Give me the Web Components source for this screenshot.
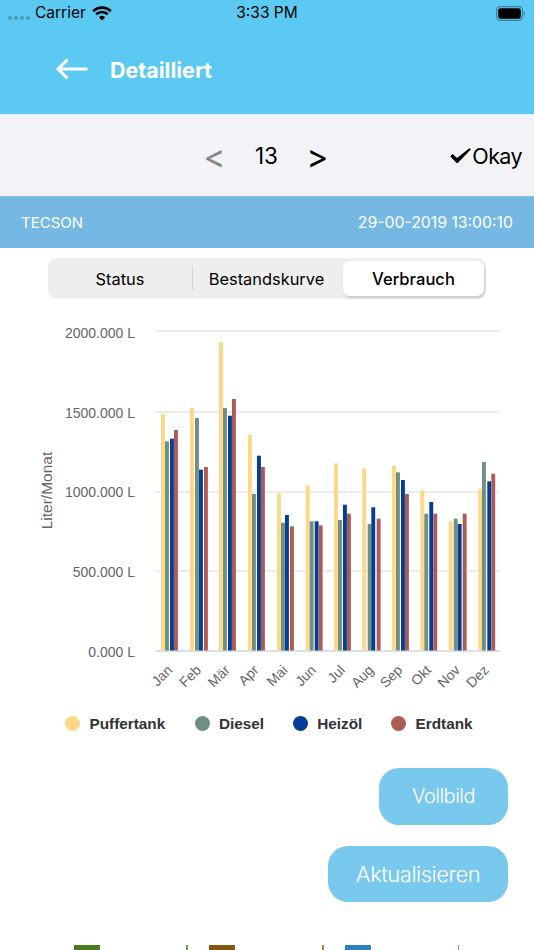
<!DOCTYPE html>
<html lang="de"><head><meta charset="utf-8"><title>Detailliert</title>
<style>
html,body{margin:0;padding:0;width:534px;height:950px;overflow:hidden;background:#fff;font-family:Inter,"Liberation Sans",sans-serif}
</style></head><body>
<detail-screen>
  <ios-status-bar carrier="Carrier" time="3:33 PM"></ios-status-bar>
  <nav-header>Detailliert</nav-header>
  <pager-row value="13" action="Okay"></pager-row>
  <info-band name="TECSON" stamp="29-00-2019 13:00:10"></info-band>
  <segment-control>
    <seg-item>Status</seg-item>
    <seg-item>Bestandskurve</seg-item>
    <seg-item selected>Verbrauch</seg-item>
  </segment-control>
  <usage-chart></usage-chart>
  <chart-legend>
    <legend-item color="#fed886" style="--w:129.5px">Puffertank</legend-item>
    <legend-item color="#6f9080" style="--w:98.3px">Diesel</legend-item>
    <legend-item color="#033e96" style="--w:98.3px">Heizöl</legend-item>
    <legend-item color="#ad5b57">Erdtank</legend-item>
  </chart-legend>
  <action-stack>
    <action-button style="--bw:129px;--fs:20px">Vollbild</action-button>
    <action-button style="--bw:180px;--fs:22px">Aktualisieren</action-button>
  </action-stack>
  <swatch-strip></swatch-strip>
</detail-screen>
<script>
function def(name, css, html, init){
  customElements.define(name, class extends HTMLElement{
    connectedCallback(){
      if(this.shadowRoot) return;
      const r=this.attachShadow({mode:'open'});
      r.innerHTML='<style>'+css+'</style>'+(typeof html==='function'?html(this):html);
      if(init) init(r,this);
    }
  });
}
def('detail-screen',':host{display:flex;flex-direction:column;width:534px;height:950px;overflow:hidden;background:#fff}::slotted(*){flex:none}','<slot></slot>');
def('ios-status-bar',`:host{display:grid;grid-template-columns:1fr auto 1fr;align-items:center;height:26px;background:#5bc9f1;color:#000;font-size:15.5px;line-height:26px}
.l{display:flex;align-items:center;padding-left:8px}.dots{display:flex;gap:2px;margin:9px 5px 0 0}.dots i{width:4px;height:4px;border-radius:50%;background:#4a9dbb}
.wifi{margin-left:6px}.r{display:flex;justify-content:flex-end;padding-right:9px}`,
 h=>`<div class="l"><span class="dots"><i></i><i></i><i></i><i></i></span><span>${h.getAttribute('carrier')}</span>
 <svg class="wifi" width="20" height="15" viewBox="0 0 20 15"><path d="M10 14.6 6.9 11.2a4.6 4.6 0 0 1 6.2 0Z" fill="#000"/><path d="M1.2 5.2a12.8 12.8 0 0 1 17.6 0M4.2 8.3a8.5 8.5 0 0 1 11.6 0" fill="none" stroke="#000" stroke-width="2.7"/></svg></div>
 <span>${h.getAttribute('time')}</span>
 <div class="r"><svg width="29" height="15" viewBox="0 0 29 15"><rect x=".6" y=".6" width="25.8" height="13.8" rx="3.6" fill="none" stroke="#3c7f9c" stroke-width="1.1"/><rect x="2.2" y="2.2" width="22.6" height="10.6" rx="2.2" fill="#000"/><path d="M27.6 5.2c1 .3 1.2 1.2 1.2 2.3s-.2 2-1.2 2.3Z" fill="#3c7f9c"/></svg></div>`);
def('nav-header',`:host{display:flex;align-items:center;height:87.5px;box-sizing:border-box;padding-left:56px;background:#5bc9f1;color:#fff;font-size:21.5px;font-weight:700;gap:22px}
svg{display:block;margin-top:-1px}`,
 `<svg width="32" height="22" viewBox="0 0 32 22"><path d="M31.5 11H3M11.5 1.5 2.2 11l9.3 9.5" fill="none" stroke="#fff" stroke-width="3.2"/></svg><slot></slot>`);
def('pager-row',`:host{display:flex;align-items:center;height:82.5px;background:#f2f2f7;border-top:1px solid #e8eef4;box-sizing:border-box;padding-top:1px;color:#000;font-size:22.5px}
.p{display:flex;align-items:center;margin-left:207px}.a{font-size:33px;line-height:1;width:15px;display:flex;justify-content:center;margin-top:1px}
.prev{color:#858585;font-weight:400}.next{font-weight:400}.v{width:87px;padding-left:1px;text-align:center}.ok{margin-left:auto;margin-right:12px;display:flex;align-items:center;gap:1px;font-size:21.5px;letter-spacing:-.6px}
.ok svg{margin-top:-1px}`,
 h=>`<div class="p"><span class="a prev">&lt;</span><span class="v">${h.getAttribute('value')}</span><span class="a next">&gt;</span></div>
 <div class="ok"><svg width="21" height="15" viewBox="0 0 21 15"><path d="M.2 8.3 2.7 5.9 7 9.9 19.4.2 21 1.3 7.8 15H6.6Z" fill="#000"/></svg><span>${h.getAttribute('action')}</span></div>`);
def('info-band',`:host{display:flex;align-items:center;justify-content:space-between;height:52px;padding:0 21px;background:#75b8e4;color:#fff;font-size:15px;border-top:1px solid #8cc4e8;box-sizing:border-box}.d{font-size:15.8px}`,
 h=>`<span>${h.getAttribute('name')}</span><span class="d">${h.getAttribute('stamp')}</span>`);
def('segment-control',`:host{display:flex;align-self:flex-start;align-items:stretch;margin:10px 0 0 48px;width:438px;height:41px;box-sizing:border-box;padding:3px 2px 3px 0;background:#eee;border-radius:9px;color:#000}`,'<slot></slot>',(r,h)=>{
  const items=h.querySelectorAll('seg-item');
  const w=['144px','149px','141px'];
  items.forEach((e,i)=>e.style.width=w[i]);
  items[1].style.marginRight='2px';
  items[0].setAttribute('divider','');
});
def('seg-item',`:host{display:flex;align-items:center;justify-content:center;box-sizing:border-box;font-size:16.4px;font-weight:400;position:relative;border-radius:7px}
:host([selected]){background:#fff;box-shadow:1px 2px 3px rgba(0,0,0,.16);font-weight:500;font-size:16.6px}
:host([divider])::after{content:"";position:absolute;right:-1px;top:6px;bottom:6px;width:1.5px;background:#d6d6d6}`,'<slot></slot>');
def('usage-chart',`:host{display:block;height:409px}svg{display:block}text{font-family:"Liberation Sans",Arial,sans-serif;font-size:14px;fill:#666}text.t{font-size:15.5px}`,
 `<svg id="c" width="534" height="409" viewBox="0 299 534 409"></svg>`,(r)=>{
  const m=['Jan','Feb','Mär','Apr','Mai','Jun','Jul','Aug','Sep','Okt','Nov','Dez'];
  const col=['#fed886','#6f9080','#033e96','#ad5b57'];
  const xs=[[161,165,170,174],[190,195,199,204],[219,223,228,232],[248,252,257,261],[277,281,285,290],[305.7,309.7,314.7,318.7],[334,338,343,347],[362.3,367.7,371.3,376.7],[392,396,401,405],[420.3,424.3,429.3,433.3],[448.7,453.7,457.7,462.7],[478.3,482,487.3,491.3]];
  const ys=[[414,441.3,438.7,430],[408,418,469.7,467],[342,408,415.7,399],[435,494,455.7,467],[493,522.7,515,526.3],[485.3,521.3,521.3,525.3],[463.3,520,504.7,513.7],[468.3,524,507.3,518.7],[466,472.3,480,494],[490.3,513.7,502,513.7],[521.3,518.7,524,513.7],[489,462,481.3,473.7]];
  let s='';
  [[331,'2000.000 L',338],[412,'1500.000 L',418],[492,'1000.000 L',497],[571,'500.000 L',577],[651,'0.000 L',657]].forEach(([y,t,b],i)=>{
    s+=`<rect x="155" y="${y-.75}" width="345" height="1.5" fill="${i==4?'#ccd6eb':'#e6e6e6'}"/><text x="135" y="${b}" text-anchor="end">${t}</text>`;
  });
  xs.forEach((g,i)=>g.forEach((x,j)=>{s+=`<rect x="${x}" y="${ys[i][j]}" width="3.9" height="${650.5-ys[i][j]}" fill="${col[j]}"/>`;}));
  m.forEach((t,i)=>{const x=155+28.75*(i+.5)+4,y=671;s+=`<text x="${x}" y="${y}" text-anchor="end" transform="rotate(-45 ${x} ${y})">${t}</text>`;});
  s+=`<text class="t" x="51.5" y="490.5" text-anchor="middle" transform="rotate(-90 51.5 490.5)">Liter/Monat</text>`;
  r.getElementById('c').innerHTML=s;
 });
def('chart-legend',`:host{display:flex;align-items:center;height:31px;padding-left:65px}`,'<slot></slot>');
def('legend-item',`:host{display:flex;align-items:center;gap:9.5px;width:var(--w,auto);font:700 15.3px "Liberation Sans",Arial,sans-serif;color:#333}i{width:15px;height:15px;border-radius:50%;flex:none}`,
 h=>`<i style="background:${h.getAttribute('color')}"></i><slot></slot>`);
def('action-stack',`:host{display:flex;flex-direction:column;align-items:flex-end;gap:21px;padding:29px 26px 0 0}`,'<slot></slot>');
def('action-button',`:host{display:flex;align-items:center;justify-content:center;width:var(--bw);height:56.5px;border-radius:20px;background:#79c8ee;color:#fff;font-size:var(--fs);font-weight:350;letter-spacing:-.5px}`,'<slot></slot>');
def('swatch-strip',`:host{display:flex;margin-top:43px;padding-left:73.5px;height:30px}
div{width:135.8px;flex:none;display:flex;justify-content:space-between}b{display:block;width:26px;height:30px}u{display:block;width:1.5px;height:30px;margin-right:21.5px}`,
 `<div><b style="background:#4a7a22"></b><u style="background:#6f9a4a"></u></div><div><b style="background:#85570f"></b><u style="background:#a88748"></u></div><div><b style="background:#2f7fc1"></b><u style="background:#4f97d2"></u></div>`);
</script>
</body></html>
